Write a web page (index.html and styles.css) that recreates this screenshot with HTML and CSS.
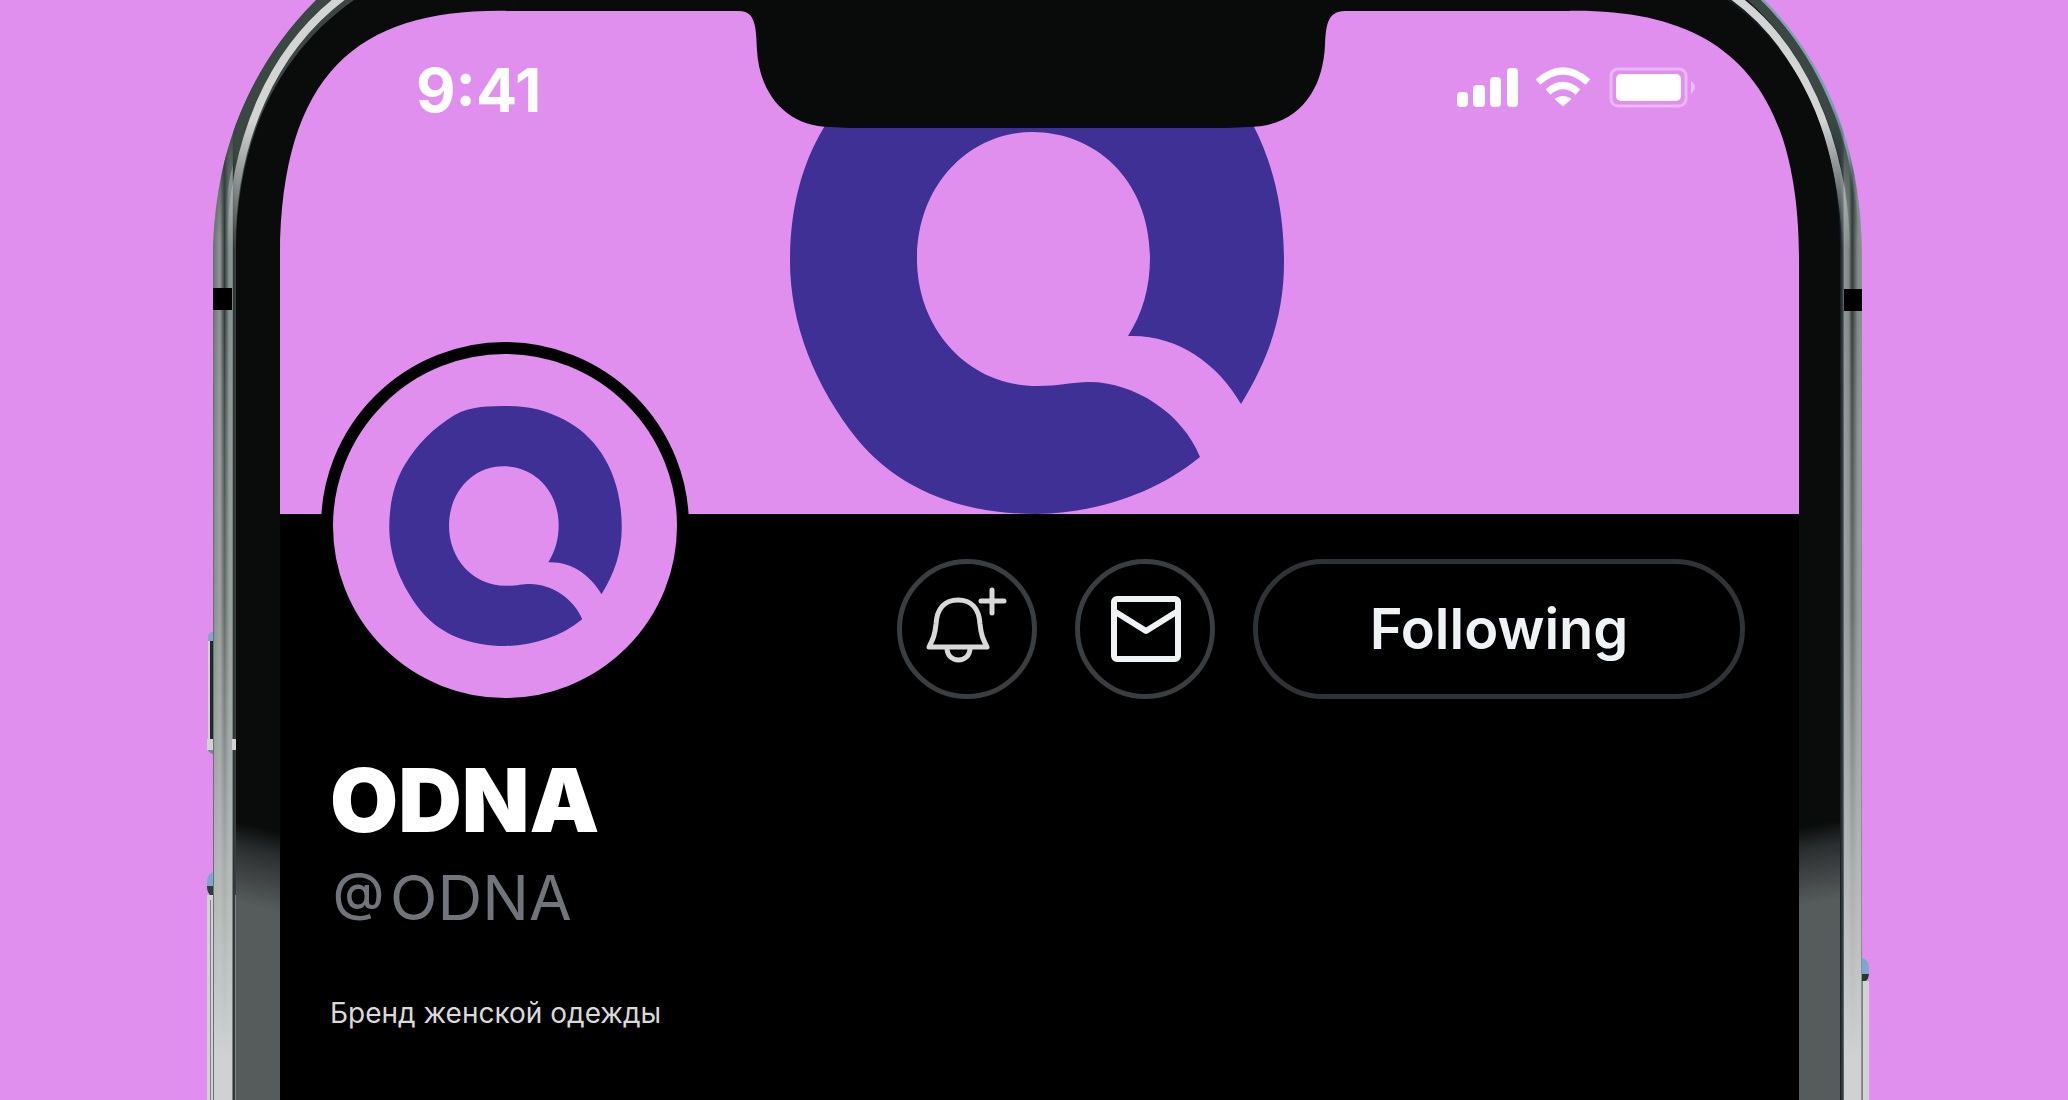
FILE: index.html
```
<!doctype html>
<html lang="ru">
  <head>
    <meta charset="UTF-8" />
    <meta name="viewport" content="width=device-width, initial-scale=1">
    <title>ODNA</title>
    <link rel="stylesheet" href="styles.css">
  </head>
  <body>
    <svg class="defs" aria-hidden="true">
      <symbol id="logo" viewBox="0 0 494 510">
        <path d="M410 453C365 490 305 509 247 510C170 510 108 485 67 435C25 382 0 320 0 257C0 205 12 160 33 125C58 82 97 44 139 19C172 0 215 0 253 0C300 0 335 10 373 30C440 65 494 140 494 258C494 312 478 356 451 400C427 358 385 330 338 332C352 310 360 285 360 253C359 175 305 128 242 128C180 128 127 180 127 255C127 325 178 382 247 382C270 382 282 378 299 378C345 378 393 410 410 453Z" />
      </symbol>
    </svg>

    <main class="phone">
      <div class="screen">
        <header class="cover">
          <div class="status">
            <time class="clock">9:41</time>
            <svg class="status-icons" width="242" height="48" viewBox="0 0 242 48" aria-hidden="true">
              <g fill="#fff">
                <rect x="1" y="26" width="11" height="15" rx="4" />
                <rect x="17" y="19" width="12" height="22" rx="4" />
                <rect x="34" y="11" width="11" height="30" rx="4" />
                <rect x="51" y="2" width="11" height="39" rx="4" />
                <path d="M107 40L99 33Q107 28 115 33Z" stroke="#fff" stroke-linejoin="round" />
                <rect x="160" y="8" width="65" height="27" rx="5" />
              </g>
              <path d="M82 16Q107 -6 132 16M92 26Q107 13 122 26" fill="none" stroke="#fff" stroke-width="7" />
              <rect x="155" y="3" width="75" height="37" rx="7" fill="none" stroke="#fff" stroke-opacity=".35" stroke-width="3" />
              <path d="M235 15Q243 21 235 28Z" fill="#fff" fill-opacity=".4" />
            </svg>
          </div>
          <svg class="cover-logo" aria-hidden="true"><use href="#logo" /></svg>
        </header>

        <section class="profile">
          <div class="toolbar">
            <div class="avatar"><svg class="avatar-logo" role="img" aria-label="ODNA"><use href="#logo" /></svg></div>
            <div class="actions">
              <button class="round" type="button" aria-label="Notify">
                <svg width="130" height="130" viewBox="5 5 130 130" fill="none" stroke="#d9d9d9" stroke-width="5" stroke-linecap="round" stroke-linejoin="round">
                  <path d="M32 88C36 80 38 76 39 65C40 49 48 41 61 41C74 41 82 49 83 65C84 76 86 80 90 88Z" />
                  <path d="M50 89C50 105 73 105 73 89" />
                  <path d="M95 31V54M84 42H107" />
                </svg>
              </button>
              <button class="round" type="button" aria-label="Message">
                <svg width="130" height="130" viewBox="5 5 130 130" fill="none" stroke="#eff3f4" stroke-width="6" stroke-linejoin="round">
                  <rect x="39" y="40" width="64" height="60" rx="3" />
                  <path d="M39 52L71 72L103 52" />
                </svg>
              </button>
              <button class="follow" type="button">Following</button>
            </div>
          </div>
          <h1 class="name">ODNA</h1>
          <p class="handle"><span class="at">@</span>ODNA</p>
          <p class="bio">Бренд женской одежды</p>
        </section>
      </div>

      <div class="top-bar"></div>

      <!-- left side of the body, drawn past the bottom so it runs off the window -->
      <svg class="frame frame-left" aria-hidden="true">
        <defs>
          <linearGradient id="metalLeft" gradientUnits="userSpaceOnUse" x1="7" y1="0" x2="30" y2="0">
            <stop offset="0" stop-color="#65706d" />
            <stop offset=".3" stop-color="#8f9795" />
            <stop offset=".5" stop-color="#303a37" />
            <stop offset=".7" stop-color="#87908e" />
            <stop offset=".84" stop-color="#8b9391" />
            <stop offset=".88" stop-color="#2c3432" />
            <stop offset="1" stop-color="#3c4543" />
          </linearGradient>
          <linearGradient id="shine" gradientUnits="userSpaceOnUse" x1="0" y1="300" x2="0" y2="1060">
            <stop offset="0" stop-color="#cfd3d3" stop-opacity="0" />
            <stop offset=".4" stop-color="#b0b6b5" stop-opacity=".4" />
            <stop offset=".75" stop-color="#bcc1c0" stop-opacity=".85" />
            <stop offset="1" stop-color="#cfd1d2" />
          </linearGradient>
          <linearGradient id="glassLeft" gradientUnits="userSpaceOnUse" x1="40" y1="824" x2="22" y2="900">
            <stop offset="0" stop-color="#0a0c0c" />
            <stop offset=".3" stop-color="#2b2e2e" />
            <stop offset="1" stop-color="#565b5b" />
          </linearGradient>
          <linearGradient id="stripe" gradientUnits="userSpaceOnUse" x1="0" y1="120" x2="0" y2="250">
            <stop offset="0" stop-color="#d2d5d4" />
            <stop offset="1" stop-color="#d2d5d4" stop-opacity="0" />
          </linearGradient>
          <linearGradient id="shade" gradientUnits="userSpaceOnUse" x1="0" y1="120" x2="0" y2="240">
            <stop offset="0" stop-color="#3a4743" />
            <stop offset="1" stop-color="#3a4743" stop-opacity="0" />
          </linearGradient>
        </defs>
        <path fill="url(#metalLeft)" d="M7 3000V253C8 175 30 80 110 0H150C70 56 33 145 32 247V3000Z" />
        <path fill="none" stroke="url(#shade)" stroke-width="9" d="M121 -4C50 64 14 150 13 240" />
        <path fill="none" stroke="url(#stripe)" stroke-width="8" d="M140 -6C66 48 26 140 25 250" />
        <path fill="url(#shine)" d="M8 310H26V3000H8Z" />
        <path fill="#000" d="M7 288H26V310H7Z" />
        <path fill="url(#glassLeft)" d="M148 0H310V11C158 6 74 66 74 260V3000H30V247C31 145 68 56 148 0Z" />
        <path fill="#7fa6cc" d="M2 636Q3 632 7 632V641H2Z" />
        <path fill="#1d2b27" d="M2 641H7V739H2Z" />
        <path fill="#d0d3d2" d="M1 739H7V750H1ZM2 641H4V739H2ZM1 895H7V3000H1ZM26 739H30V750H26Z" />
        <path fill="#7c8684" d="M2 750H7V754Q3 753 2 750ZM4 900H5V3000H4ZM29 895H30V3000H29Z" />
        <path fill="#7fa6cc" d="M1 884Q1 873 7 872V886H1Z" />
        <path fill="#2b3f38" d="M1 886H7V895H4Q1 892 1 886Z" />
      </svg>

      <svg class="frame frame-right" aria-hidden="true">
        <defs>
          <linearGradient id="metalRight" gradientUnits="userSpaceOnUse" x1="280" y1="0" x2="302" y2="0">
            <stop offset="0" stop-color="#151c1f" />
            <stop offset=".13" stop-color="#3a4347" />
            <stop offset=".2" stop-color="#8d9593" />
            <stop offset=".4" stop-color="#7f8886" />
            <stop offset=".55" stop-color="#303a36" />
            <stop offset=".8" stop-color="#7f8886" />
            <stop offset="1" stop-color="#8b9391" />
          </linearGradient>
          <linearGradient id="glassRight" gradientUnits="userSpaceOnUse" x1="258" y1="824" x2="272" y2="900">
            <stop offset="0" stop-color="#0a0c0c" />
            <stop offset=".3" stop-color="#2b2e2e" />
            <stop offset="1" stop-color="#565b5b" />
          </linearGradient>
          <linearGradient id="sky" gradientUnits="userSpaceOnUse" x1="0" y1="100" x2="0" y2="236">
            <stop offset="0" stop-color="#7fa0b4" />
            <stop offset="1" stop-color="#7fa0b4" stop-opacity="0" />
          </linearGradient>
        </defs>
        <path fill="url(#metalRight)" d="M302 3000V253C301 155 272 72 201 0H165C238 50 278 138 278 245V3000Z" />
        <path fill="none" stroke="url(#sky)" stroke-width="4" d="M198 -4C262 60 296 140 299 236" />
        <path fill="none" stroke="url(#shade)" stroke-width="9" d="M189 -5C252 52 292 140 294 240" />
        <path fill="none" stroke="url(#stripe)" stroke-width="8" d="M170 -6C240 42 284 140 286 250" />
        <path fill="url(#shine)" d="M284 311H301V3000H284Z" />
        <path fill="#000" d="M284 289H302V311H284Z" />
        <path fill="url(#glassRight)" d="M167 0H0V11C158 6 239 75 239 260V3000H280V245C280 138 240 50 167 0Z" />
        <path fill="#7fa6cc" d="M302 958Q309 959 309 970V974H302Z" />
        <path fill="#24382f" d="M302 974H309Q308 981 305 981H302Z" />
        <path fill="#d0d3d2" d="M302 981H309V3000H302Z" />
        <path fill="#7c8684" d="M302 981H303V3000H302Z" />
      </svg>

      <svg class="notch" width="606" height="128" viewBox="0 0 606 128" aria-hidden="true">
        <path fill="#090a0a" d="M0 0H606V11C588 11 587 26 586 45C584 90 560 127 508 127L488 128H110L92 127C46 127 20 92 18 50C17 28 17 11 0 11Z" />
      </svg>
    </main>
  </body>
</html>
```

FILE: styles.css
```
* {
  box-sizing: border-box;
}
body {
  margin: 0;
  background: #e08fee;
  font-family: Inter, "Noto Sans", sans-serif;
}
h1, p {
  margin: 0;
}
.defs {
  display: none;
}
.phone {
  position: relative;
  margin: 0 198px 0 206px;
  padding: 0 71px 0 74px;
  min-height: 100vh;
  overflow: hidden;
  display: flex;
}
.screen {
  flex: 1;
  background: #000;
}

/* cover */
.cover {
  height: 514px;
  padding-right: 6px;
  background: #e08fee;
  display: grid;
  grid-template-rows: 514px;
}
.status {
  grid-area: 1 / 1;
  display: flex;
  justify-content: space-between;
  align-items: flex-start;
  padding: 66px 95px 0 136px;
}
.clock {
  color: #fff;
  font-size: 61px;
  font-weight: 700;
  line-height: 48px;
}
.cover-logo {
  grid-area: 1 / 1;
  width: 494px;
  height: 510px;
  place-self: end center;
  fill: #3e3094;
}

/* profile */
.profile {
  padding: 0 54px 40px 50px;
}
.toolbar {
  display: flex;
  justify-content: space-between;
  align-items: flex-start;
  margin-left: -9px;
}
.avatar {
  display: grid;
  place-items: center;
  width: 368px;
  height: 368px;
  margin-top: -172px;
  border: 12px solid #000;
  border-radius: 50%;
  background: #e08fee;
}
.avatar-logo {
  width: 233px;
  height: 240px;
  fill: #3e3094;
}
.actions {
  display: flex;
  gap: 38px;
  padding-top: 45px;
}
.round, .follow {
  height: 140px;
  padding: 0;
  border: 5px solid #3a3e41;
  border-radius: 70px;
  background: none;
}
.round {
  width: 140px;
}
.round svg {
  display: block;
}
.follow {
  width: 492px;
  border-color: #2f3336;
  color: #eff3f4;
  font-family: inherit;
  font-size: 56px;
  font-weight: 600;
}
.name {
  margin-top: 37px;
  color: #fff;
  font-size: 88px;
  font-weight: 900;
  line-height: 106px;
}
.handle {
  display: flex;
  gap: 6px;
  padding-left: 3px;
  color: #71757b;
  font-size: 62px;
  font-weight: 400;
  line-height: 90px;
}
.at {
  font-size: 52px;
  font-weight: 500;
  line-height: 78px;
}
.bio {
  margin-top: 50px;
  color: #d9d9d9;
  font-size: 28px;
  line-height: 40px;
}

/* phone body, lies over the screen */
.frame {
  position: absolute;
  top: 0;
  width: 310px;
  height: 100%;
}
.frame-left {
  left: 0;
}
.frame-right {
  right: 0;
}
.top-bar {
  position: absolute;
  top: 0;
  left: 300px;
  right: 300px;
  height: 11px;
  background: #090a0a;
}
.notch {
  position: absolute;
  top: 0;
  left: 50%;
  margin-left: -299px;
}
```
